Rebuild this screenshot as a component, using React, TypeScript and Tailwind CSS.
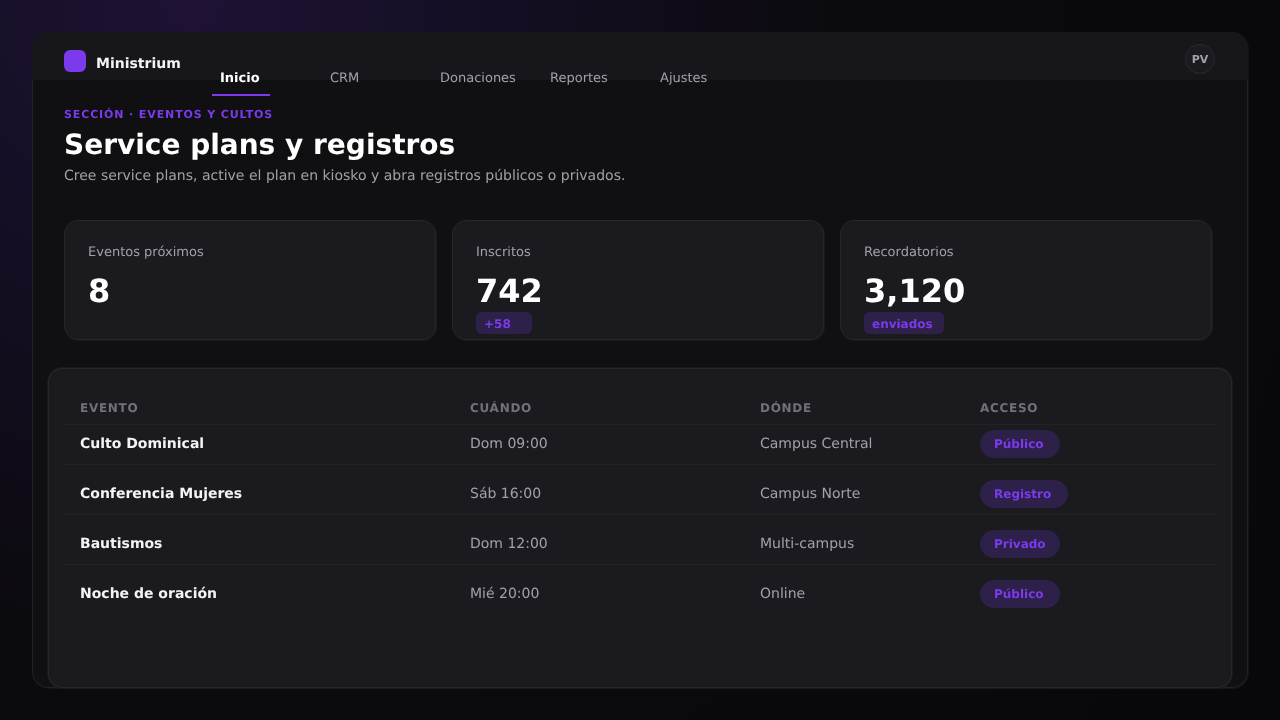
const nav = ['Inicio', 'CRM', 'Donaciones', 'Reportes', 'Ajustes']

const stats = [
  { label: 'Eventos próximos', value: '8' },
  { label: 'Inscritos', value: '742', chip: '+58', chipWidth: 'w-[56px]' },
  { label: 'Recordatorios', value: '3,120', chip: 'enviados', chipWidth: 'w-[80px]' },
]

const events = [
  { name: 'Culto Dominical', when: 'Dom 09:00', where: 'Campus Central', access: 'Público', pill: 'w-[80px]' },
  { name: 'Conferencia Mujeres', when: 'Sáb 16:00', where: 'Campus Norte', access: 'Registro', pill: 'w-[88px]' },
  { name: 'Bautismos', when: 'Dom 12:00', where: 'Multi-campus', access: 'Privado', pill: 'w-[80px]' },
  { name: 'Noche de oración', when: 'Mié 20:00', where: 'Online', access: 'Público', pill: 'w-[80px]' },
]

const App = () => {
  return (
    <div className="h-screen w-full overflow-hidden bg-[#0a0a0c] bg-[radial-gradient(circle_at_15%_0%,#1f1235_0%,#150e24_22%,#0b0a0e_50%,#08080a_100%)] px-[32px] pt-[32px] font-['DejaVu_Sans',sans-serif] [text-rendering:geometricPrecision] will-change-transform">
      <div className="h-[656px] w-[1216px] rounded-[16px] border border-[#232327] bg-[#101012] shadow-[1px_1px_0_0_#141416]">
        {/* Top bar */}
        <header className="-mx-px -mt-px flex h-[48px] items-start rounded-t-[16px] bg-[#17171b] pl-[32px] pr-[33px] pt-[18px]">
          <div className="h-[22px] w-[22px] rounded-[6px] bg-[#7c3aed]"></div>
          <div className="ml-[10px] w-[116px] text-[14px] font-bold leading-[28px] text-[#f4f4f5]">Ministrium</div>
          <nav className="grid grid-cols-[110px_110px_110px_110px_110px] pt-[19px]">
            {nav.map((item, i) => (
              <div key={item}>
                <div
                  className={
                    i === 0
                      ? 'w-[58px] border-b-2 border-[#7c3aed] px-2 pb-[5px] text-[13px] font-bold leading-[20px] text-white'
                      : 'px-2 text-[13px] leading-[20px] text-[#a1a1aa]'
                  }
                >
                  {item}
                </div>
              </div>
            ))}
          </nav>
          <div className="ml-auto -mt-[6px] flex h-[30px] w-[30px] items-center justify-center rounded-full border border-[#2a2a2f] bg-[#1a1a1f] pt-[2px] text-[11px] font-bold text-[#a1a1aa]">
            PV
          </div>
        </header>

        {/* Heading */}
        <div className="px-[31px] pt-[28px]">
          <p className="text-[11px] font-bold leading-[13px] tracking-[0.08em] text-[#7c3aed]">SECCIÓN · EVENTOS Y CULTOS</p>
          <h1 className="mt-[8px] text-[28px] font-bold leading-[32px] text-white">Service plans y registros</h1>
          <p className="mt-[5px] text-[14px] leading-[20px] text-[#a1a1aa]">Cree service plans, active el plan en kiosko y abra registros públicos o privados.</p>

          {/* Stat cards */}
          <div className="mt-[34px] grid w-[1148px] grid-cols-3 gap-4">
            {stats.map((stat) => (
              <div key={stat.label} className="h-[120px] rounded-[14px] border border-[#27272b] bg-[#1a1a1f] px-[23px] pt-[23px] shadow-[1px_1px_0_0_#1a1a1d]">
                <div className="text-[13px] leading-[18px] text-[#a1a1aa]">{stat.label}</div>
                <div className="mt-[10px] text-[32px] font-bold leading-[38px] text-white">{stat.value}</div>
                {stat.chip && (
                  <div className={`${stat.chipWidth} mt-[2px] h-[22px] rounded-[6px] bg-[#2d2049] pl-2 text-[12px] font-bold leading-[25px] text-[#7c3aed]`}>
                    {stat.chip}
                  </div>
                )}
              </div>
            ))}
          </div>
        </div>

        {/* Events table */}
        <div className="mx-[15px] mt-[28px] h-[320px] rounded-[14px] border border-[#27272b] bg-[#1a1a1f] px-[15px] pt-[29px] shadow-[0_0_0_1px_#1a1a1d]">
          <div className="grid grid-cols-[390px_290px_220px_1fr] border-b border-[#212126] px-4 pb-[6px] text-[12px] font-bold leading-[20px] tracking-[0.06em] text-[#71717a]">
            <div>EVENTO</div>
            <div>CUÁNDO</div>
            <div>DÓNDE</div>
            <div>ACCESO</div>
          </div>
          {events.map((ev, i) => (
            <div
              key={ev.name}
              className={`grid grid-cols-[390px_290px_220px_1fr] items-center px-4 pb-[6px] ${i === 0 ? 'pt-[5px]' : 'pt-[15px]'} ${i < 3 ? 'border-b border-[#212126]' : ''}`}
            >
              <div className="text-[14px] font-bold text-[#f4f4f5]">{ev.name}</div>
              <div className="text-[14px] text-[#a1a1aa]">{ev.when}</div>
              <div className="text-[14px] text-[#a1a1aa]">{ev.where}</div>
              <div>
                <div className={`${ev.pill} h-[28px] rounded-full bg-[#2d2049] pl-[14px] text-[12px] font-bold leading-[29px] text-[#7c3aed]`}>
                  {ev.access}
                </div>
              </div>
            </div>
          ))}
        </div>
      </div>
    </div>
  )
}

export default App
